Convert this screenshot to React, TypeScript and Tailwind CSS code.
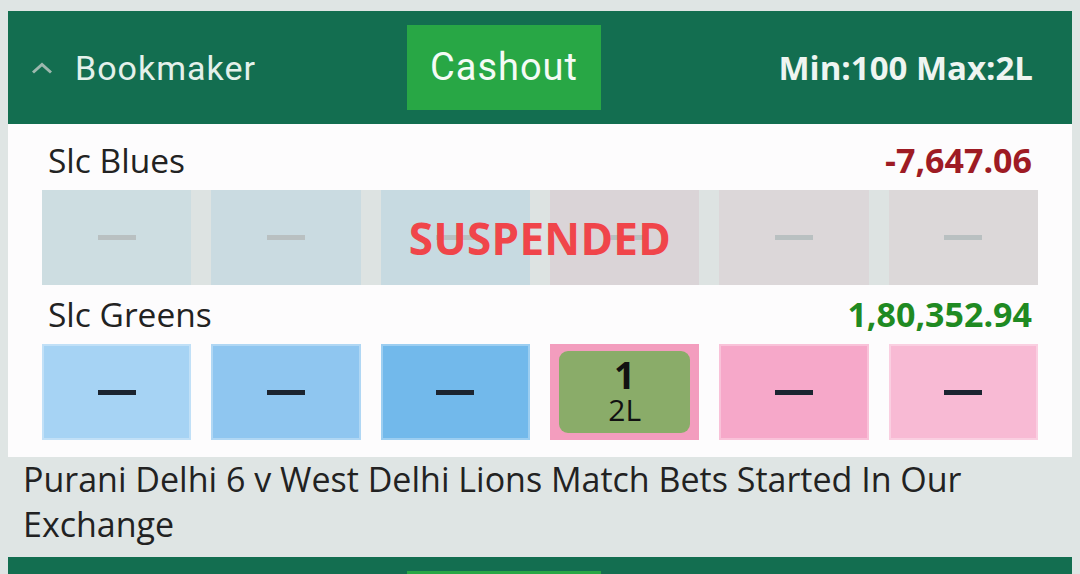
import React from "react";

const Dash = ({ color }: { color: string }) => (
  <div className={`h-[5px] w-[38px] ${color}`} />
);

function Header() {
  return (
    <div className="flex h-[113px] items-center bg-[#136e50]">
      <div className="flex w-[399px] items-center pl-[23px]">
        <svg width="22" height="12" viewBox="0 0 22 12" className="mr-[22px]">
          <path d="M2 10.5 L11 2.5 L20 10.5" fill="none" stroke="#9db8ae" strokeWidth="3" />
        </svg>
        <span className="font-['Roboto'] text-[34px] leading-none tracking-[1px] text-[#e4f1eb]">Bookmaker</span>
      </div>
      <div className="flex h-[85px] w-[194px] items-center justify-center bg-[#28a745] font-['Roboto'] text-[38px] tracking-[1px] text-[#f4fbf6]">
        Cashout
      </div>
      <div className="flex-1 pr-[39px] text-right font-['Open_Sans'] text-[33px] font-bold text-[#eef5f1]">
        Min:100 Max:2L
      </div>
    </div>
  );
}

export default function App() {
  const susp = ["bg-[#cddde1]", "bg-[#cadbe1]", "bg-[#c7dae1]", "bg-[#dad4d7]", "bg-[#dcd7d9]", "bg-[#dcd8d9]"];
  const live = ["bg-[#a6d3f4]", "bg-[#8fc6f0]", "bg-[#72b9eb]", "", "bg-[#f6a8c9]", "bg-[#f8bad4]"];
  return (
    <div className="min-h-screen bg-[#dfe5e4] px-[8px] pt-[11px] font-['Open_Sans']">
      <div>
        <Header />
        <div className="bg-[#fdfcfd] px-[34px] pb-[17px] pt-[7px]">
          <div className="flex h-[59px] items-center justify-between px-[6px]">
            <span className="text-[33.5px] text-[#222]">Slc Blues</span>
            <span className="text-[34px] font-bold text-[#9e1b24]">-7,647.06</span>
          </div>
          <div className="relative grid h-[95px] grid-cols-6 gap-[20px] bg-[#dde3e2]">
            {susp.map((c, i) => (
              <div key={i} className={`flex items-center justify-center ${c}`}>
                <Dash color="bg-[#b9c0c1]" />
              </div>
            ))}
            <div className="absolute inset-0 flex items-center justify-center">
              <span className="text-[44px] font-bold tracking-[0.3px] text-[#f0454a]">SUSPENDED</span>
            </div>
          </div>
          <div className="flex h-[59px] items-center justify-between px-[6px]">
            <span className="text-[33.5px] text-[#222]">Slc Greens</span>
            <span className="text-[34px] font-bold text-[#1f8a22]">1,80,352.94</span>
          </div>
          <div className="grid h-[96px] grid-cols-6 gap-[20px]">
            {live.map((c, i) =>
              i === 3 ? (
                <div key={i} className="flex bg-[#f39dbe] p-[7px_9px]">
                  <div className="flex flex-1 flex-col items-center justify-center rounded-[9px] bg-[#8aac69]">
                    <span className="text-[37px] font-bold leading-[36px] text-[#111]">1</span>
                    <span className="text-[30px] leading-[34px] text-[#111]">2L</span>
                  </div>
                </div>
              ) : (
                <div key={i} className={`flex items-center justify-center border-2 border-white/30 ${c}`}>
                  <Dash color="bg-[#1b2430]" />
                </div>
              )
            )}
          </div>
        </div>
      </div>
      <p className="pl-[15px] pr-[10px] text-[34px] leading-[45px] text-[#222]">
        Purani Delhi 6 v West Delhi Lions Match Bets Started In Our Exchange
      </p>
      <div className="mt-[10px]">
        <Header />
      </div>
    </div>
  );
}
